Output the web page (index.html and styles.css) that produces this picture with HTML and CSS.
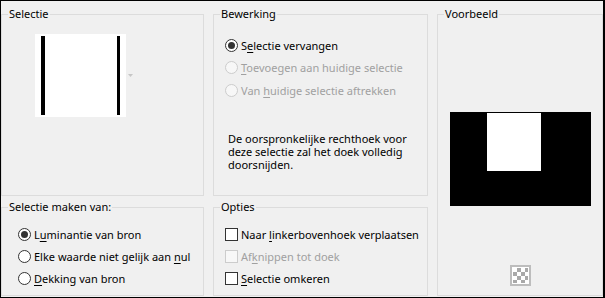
FILE: index.html
```html
<!DOCTYPE html>
<html lang="nl">
<head>
<meta charset="utf-8">
<title>Selectie</title>
<link rel="stylesheet" href="styles.css">
</head>
<body>
<div class="frame">
  <div class="grid">
    <fieldset class="group g-sel">
      <legend>Selectie</legend>
      <div class="sel-preview">
        <div class="sel-box"><span class="bar bar-l"></span><span class="bar bar-r"></span></div>
        <svg class="drop" width="5" height="3" viewBox="0 0 5 3"><polygon points="0,0 5,0 2.5,3" fill="#c6c6c6"/></svg>
      </div>
    </fieldset>

    <fieldset class="group g-bew">
      <legend>Bewerking</legend>
      <div class="opts opts-bew">
        <div class="row"><span class="radio checked"></span><span>S<u>e</u>lectie vervangen</span></div>
        <div class="row disabled"><span class="radio"></span><span><u>T</u>oevoegen aan huidige selectie</span></div>
        <div class="row disabled"><span class="radio"></span><span>Van <u>h</u>uidige selectie aftrekken</span></div>
      </div>
      <div class="desc">
        <div class="line">De oorspronkelijke rechthoek voor</div>
        <div class="line">deze selectie zal het doek volledig</div>
        <div class="line">doorsnijden.</div>
      </div>
    </fieldset>

    <fieldset class="group g-voor">
      <legend>Voorbeeld</legend>
      <div class="preview"><div class="preview-inner"></div></div>
      <div class="checker-btn"><div class="checker"></div></div>
    </fieldset>

    <fieldset class="group g-maken">
      <legend>Selectie maken van:</legend>
      <div class="opts opts-maken">
        <div class="row"><span class="radio checked"></span><span>L<u>u</u>minantie van bron</span></div>
        <div class="row"><span class="radio"></span><span>Elke waarde niet gelijk aan <u>n</u>ul</span></div>
        <div class="row"><span class="radio"></span><span><u>D</u>ekking van bron</span></div>
      </div>
    </fieldset>

    <fieldset class="group g-opt">
      <legend>Opties</legend>
      <div class="opts opts-opt">
        <div class="row"><span class="check"></span><span>Naar <u>l</u>inkerbovenhoek verplaatsen</span></div>
        <div class="row disabled"><span class="check"></span><span>Af<u>k</u>nippen tot doek</span></div>
        <div class="row"><span class="check"></span><span><u>S</u>electie omkeren</span></div>
      </div>
    </fieldset>
  </div>
</div>
</body>
</html>
```

FILE: styles.css
```css
* { box-sizing: border-box; }
html, body { margin: 0; padding: 0; background: #f0f0f0; }
body {
  font-family: "Noto Sans", "Liberation Sans", sans-serif;
  font-size: 11px;
  color: #000;
}
.frame {
  width: 605px;
  height: 298px;
  border-style: solid;
  border-color: #000;
  border-width: 1px 2px 1px 1px;
  background: #f0f0f0;
  overflow: hidden;
}
.grid {
  display: grid;
  grid-template-columns: 203px 215px 166px;
  grid-template-rows: 190px 97px;
  column-gap: 9px;
  row-gap: 3px;
  padding-top: 5px;
}
.group {
  margin: 0;
  padding: 0;
  min-width: 0;
  border: 1px solid #dcdcdc;
}
.group legend {
  margin-left: 6px;
  padding: 0 1px;
  line-height: 16px;
  height: 16px;
}
.g-sel { grid-column: 1; grid-row: 1; }
.g-bew { grid-column: 2; grid-row: 1; }
.g-voor { grid-column: 3; grid-row: 1 / span 2; }
.g-maken { grid-column: 1; grid-row: 2; }
.g-opt { grid-column: 2; grid-row: 2; }

.sel-preview {
  display: flex;
  align-items: center;
  gap: 2px;
  margin: 12px 0 0 33px;
}
.sel-box {
  width: 91px;
  height: 83px;
  background: #fff;
  display: flex;
  justify-content: space-between;
  padding: 2px 6px;
}
.bar { display: block; background: #000; height: 79px; }
.bar-l { width: 4px; }
.bar-r { width: 3px; }
.drop { display: block; }

.opts { display: flex; flex-direction: column; }
.row {
  display: flex;
  align-items: center;
  gap: 3px;
  white-space: nowrap;
}
.opts-bew { margin: 12px 0 0 11px; }
.opts-bew .row { height: 22.5px; }
.opts-maken { margin: 8px 0 0 16px; }
.opts-opt { margin: 8px 0 0 11px; }
.opts-maken .row, .opts-opt .row { height: 22px; }

.radio {
  flex: none;
  width: 13px;
  height: 13px;
  border-radius: 50%;
  border: 1px solid #333;
  background: #fff;
  display: flex;
  align-items: center;
  justify-content: center;
}
.radio.checked::after {
  content: "";
  width: 7px;
  height: 7px;
  border-radius: 50%;
  background: #333;
}
.check {
  flex: none;
  width: 13px;
  height: 13px;
  border: 1px solid #333;
  background: #fff;
}
.row.disabled { color: #a0a0a0; }
.row.disabled .radio,
.row.disabled .check { border-color: #cccccc; background: #f7f7f7; }

u { text-decoration-thickness: 1px; text-underline-offset: 2px; }

.desc {
  margin: 30px 0 0 14px;
  display: flex;
  flex-direction: column;
}
.desc .line {
  height: 13.3px;
  line-height: 13.3px;
  white-space: nowrap;
}

.preview {
  width: 141px;
  height: 94px;
  background: #000;
  margin: 90px 0 0 12px;
  padding: 1px 0 0 37px;
}
.preview-inner { width: 54px; height: 58px; background: #fff; }

.checker-btn {
  width: 21px;
  height: 21px;
  margin: 59px 0 0 72px;
  border: 2px solid #bdbdbd;
  background: #fff;
  padding: 1px;
}
.checker {
  width: 100%;
  height: 100%;
  background-color: #fff;
  background-image: conic-gradient(#a9a9a9 25%, #fff 0 50%, #a9a9a9 0 75%, #fff 0);
  background-size: 8px 8px;
}
```
